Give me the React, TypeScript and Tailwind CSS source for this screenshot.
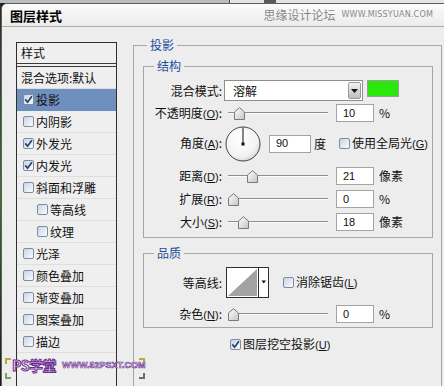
import React from 'react';

type Item = { t: string; on?: boolean; sel?: boolean; sub?: boolean };

const items: Item[] = [
  { t: '投影', on: true, sel: true },
  { t: '内阴影' },
  { t: '外发光', on: true },
  { t: '内发光', on: true },
  { t: '斜面和浮雕' },
  { t: '等高线', sub: true },
  { t: '纹理', sub: true },
  { t: '光泽' },
  { t: '颜色叠加' },
  { t: '渐变叠加' },
  { t: '图案叠加' },
  { t: '描边' },
];

function Box({ on }: { on?: boolean }) {
  return (
    <span className="flex h-[11px] w-[11px] shrink-0 items-center justify-center rounded-[2px] border border-[#7e8ca1] bg-linear-to-br from-[#c8d4e6] to-[#fbfdff]">
      {on && (
        <svg width="9" height="9" viewBox="0 0 9 9">
          <path d="M1.3 4.4 L3.6 7.2 L7.9 1.2" fill="none" stroke="#23426c" strokeWidth="1.7" />
        </svg>
      )}
    </span>
  );
}

function Key({ k }: { k: string }) {
  return (
    <span className="font-['Liberation_Sans',sans-serif] text-[11px]">
      (<span className="underline">{k}</span>)
    </span>
  );
}

function Label({ children }: { children: React.ReactNode }) {
  return <div className="w-[78px] shrink-0 whitespace-nowrap text-right leading-none">{children}</div>;
}

function Slider({ at }: { at: number }) {
  return (
    <div className="relative ml-[6px] h-[18px] w-[100px] shrink-0">
      <div className="absolute inset-x-0 top-[8px] h-px bg-[#8e8e8e]" />
      <div className="absolute inset-x-0 top-[9px] h-px bg-[#fbfbfb]" />
      <svg className="absolute top-[3px]" style={{ left: at }} width="11" height="13" viewBox="0 0 11 13">
        <defs>
          <linearGradient id="thumb" x1="0" y1="0" x2="1" y2="1">
            <stop offset="0" stopColor="#ffffff" />
            <stop offset="1" stopColor="#c4c4c4" />
          </linearGradient>
        </defs>
        <path d="M0.5 12.5 V5 L5.5 0.7 L10.5 5 V12.5 Z" fill="url(#thumb)" stroke="#7a7a7a" />
      </svg>
    </div>
  );
}

function Num({ v, unit, w = 'w-[38px]' }: { v: string; unit?: string; w?: string }) {
  return (
    <>
      <div
        className={`ml-[8px] flex h-[18px] shrink-0 items-center border border-[#a4a4a4] bg-white pl-[6px] font-['Liberation_Sans',sans-serif] text-[11px] ${w}`}
      >
        {v}
      </div>
      {unit && <span className="ml-[5px] leading-none">{unit}</span>}
    </>
  );
}

function StyleList() {
  return (
    <div className="ml-[14px] mt-[15px] h-[360px] w-[101px] shrink-0 border border-[#2e2e2e] bg-[#efefef]">
      <div className="flex h-[21px] items-center border-b border-[#3a3a3a] pl-[4px] leading-none">样式</div>
      <div className="h-[2px]" />
      <div className="flex h-[23px] items-center border-y border-t-[#3a3a3a] border-b-[#dedede] pl-[4px] leading-none">
        混合选项:默认
      </div>
      {items.map((it) => (
        <div
          key={it.t}
          className={`flex h-[22px] items-center gap-[1px] border-b leading-none ${
            it.sel ? 'border-[#6d8dbc] bg-[#6f8fbe]' : 'border-[#dedede]'
          } ${it.sub ? 'pl-[20px]' : 'pl-[6px]'}`}
        >
          <Box on={it.on} />
          <span className="ml-[1px]">{it.t}</span>
        </div>
      ))}
    </div>
  );
}

function Dial() {
  return (
    <svg className="ml-[3px] shrink-0" width="36" height="36" viewBox="0 0 36 36">
      <defs>
        <radialGradient id="dial" cx="0.4" cy="0.35" r="0.7">
          <stop offset="0" stopColor="#ffffff" />
          <stop offset="0.75" stopColor="#f2f2f2" />
          <stop offset="1" stopColor="#cfd3da" />
        </radialGradient>
      </defs>
      <circle cx="18" cy="18" r="17" fill="url(#dial)" stroke="#3d4350" strokeWidth="1" />
      <line x1="18" y1="18" x2="18" y2="1.5" stroke="#111" strokeWidth="1" />
      <rect x="16.5" y="16.5" width="3" height="3" fill="#111" />
    </svg>
  );
}

function Contour() {
  return (
    <svg className="ml-[4px] shrink-0" width="43" height="31" viewBox="0 0 43 31">
      <rect x="0.5" y="0.5" width="42" height="30" fill="#fff" stroke="#2f2f2f" />
      <path d="M2 29 L31 2 L31 29 Z" fill="#a3a3a3" />
      <line x1="32.5" y1="1" x2="32.5" y2="30" stroke="#2f2f2f" />
      <path d="M35.5 13.5 L40 13.5 L37.75 16.5 Z" fill="#111" />
    </svg>
  );
}

function Legend({ children, ml }: { children: React.ReactNode; ml: string }) {
  return <legend className={`${ml} px-[3px] text-[12px] leading-[14px] text-[#1c4e9c]`}>{children}</legend>;
}

function Panel() {
  return (
    <fieldset className="ml-[16px] mt-[11px] h-[360px] w-[309px] shrink-0 border border-[#a6a6a6]">
      <Legend ml="ml-[13px]">投影</Legend>

      <fieldset className="ml-[9px] mt-[7px] w-[290px] border border-[#a6a6a6] pb-[6px]">
        <Legend ml="ml-[10px]">结构</Legend>

        <div className="mt-[7px] flex h-[21px] items-start">
          <div className="flex h-[21px] items-center">
            <Label>混合模式:</Label>
          </div>
          <div className="ml-[2px] flex h-[21px] w-[139px] shrink-0 items-center border border-[#8e8e8e] bg-white">
            <span className="flex-1 pl-[8px] leading-none">溶解</span>
            <div className="mr-px flex h-[17px] w-[13px] items-center justify-center rounded-[2px] border border-[#9a9a9a] bg-linear-to-b from-[#f4f4f4] to-[#bdbdbd]">
              <svg width="7" height="4" viewBox="0 0 7 4">
                <path d="M0 0 H7 L3.5 4 Z" fill="#111" />
              </svg>
            </div>
          </div>
          <div className="ml-[4px] h-[17px] w-[32px] shrink-0 border border-[#9c9c9c] bg-[#2ae80c]" />
        </div>

        <div className="mt-[3px] flex h-[18px] items-center">
          <Label>
            不透明度<Key k="O" />:
          </Label>
          <Slider at={6} />
          <Num v="10" unit="%" />
        </div>

        <div className="mt-[4px] flex h-[35px] items-center">
          <Label>
            角度<Key k="A" />:
          </Label>
          <Dial />
          <Num v="90" w="w-[42px]" />
          <span className="ml-[3px] leading-none">度</span>
          <span className="ml-[13px]">
            <Box />
          </span>
          <span className="ml-[2px] whitespace-nowrap leading-none">
            使用全局光<Key k="G" />
          </span>
        </div>

        <div className="mt-[6px] flex h-[18px] items-center">
          <Label>
            距离<Key k="D" />:
          </Label>
          <Slider at={19} />
          <Num v="21" unit="像素" />
        </div>

        <div className="mt-[5px] flex h-[18px] items-center">
          <Label>
            扩展<Key k="R" />:
          </Label>
          <Slider at={0} />
          <Num v="0" unit="%" />
        </div>

        <div className="mt-[5px] flex h-[18px] items-center">
          <Label>
            大小<Key k="S" />:
          </Label>
          <Slider at={10} />
          <Num v="18" unit="像素" />
        </div>
      </fieldset>

      <fieldset className="ml-[9px] mt-[8px] w-[290px] border border-[#a6a6a6] pb-[4px]">
        <Legend ml="ml-[10px]">品质</Legend>

        <div className="mt-[7px] flex h-[31px] items-center">
          <Label>等高线:</Label>
          <Contour />
          <span className="ml-[14px]">
            <Box />
          </span>
          <span className="ml-[2px] whitespace-nowrap leading-none">
            消除锯齿<Key k="L" />
          </span>
        </div>

        <div className="mt-[7px] flex h-[18px] items-center">
          <Label>
            杂色<Key k="N" />:
          </Label>
          <Slider at={0} />
          <Num v="0" unit="%" />
        </div>
      </fieldset>

      <div className="ml-[96px] mt-[9px] flex h-[14px] items-center">
        <Box on />
        <span className="ml-[2px] whitespace-nowrap leading-none">
          图层挖空投影<Key k="U" />
        </span>
      </div>
    </fieldset>
  );
}

function TitleBar() {
  return (
    <div className="flex h-[23px] shrink-0 items-center border-b border-[#ababab] bg-linear-to-b from-[#fbfbfb] to-[#ececec] pl-[8px] pr-[11px]">
      <span className="text-[13px] font-bold leading-none text-black">图层样式</span>
      <span className="ml-auto leading-none text-[#8a8a8a]">思缘设计论坛</span>
      <span className="ml-[6px] font-['DejaVu_Sans',sans-serif] text-[8px] leading-none tracking-[0.2px] text-[#8a8a8a]">
        WWW.MISSYUAN.COM
      </span>
    </div>
  );
}

function Watermark() {
  return (
    <>
      <div className="absolute left-[5px] top-[358px] h-[6px] w-[6px] border-l-2 border-t-2 border-[#b9a93e]" />
      <div className="absolute left-[5px] top-[373px] h-[6px] w-[6px] border-b-2 border-l-2 border-[#7aa35a]" />
      <div className="absolute left-[139px] top-[358px] h-[6px] w-[6px] border-r-2 border-t-2 border-[#b9a93e]" />
      <div className="absolute left-[139px] top-[373px] h-[6px] w-[6px] border-b-2 border-r-2 border-[#6b6b6b]" />
      <div className="absolute left-[12px] top-[358px] flex items-center">
        <span className="text-[14px] font-bold leading-none tracking-[-0.5px] text-[#f3ecff] [-webkit-text-stroke:1px_#6a2c8e]">
          PS学堂
        </span>
        <span className="ml-[6px] font-['Liberation_Sans',sans-serif] text-[9px] font-bold leading-none text-[#f3ecff] [-webkit-text-stroke:0.6px_#6a2c8e]">
          WWW.52PSXT.COM
        </span>
      </div>
    </>
  );
}

export default function App() {
  return (
    <div className="relative flex h-[386px] w-[444px] flex-col overflow-hidden bg-[#1b1b1b] font-['Noto_Sans_CJK_SC','Liberation_Sans',sans-serif] text-[12px] text-[#111]">
      <div className="flex h-[3px] shrink-0">
        <div className="w-[229px] bg-[#bcbcbc]" />
        <div className="w-px bg-[#4a4a4a]" />
        <div className="w-[34px] bg-[#e4e4e4]" />
        <div className="w-[12px] bg-[#5a5a5a]" />
        <div className="flex-1 bg-[#e4e4e4]" />
      </div>
      <div className="flex min-h-0 flex-1">
        <div className="w-px shrink-0 bg-linear-to-b from-[#2a2a2a] via-[#2f7a22] to-[#1a1a1a]" />
        <div className="flex flex-1 flex-col overflow-hidden rounded-tl-[6px] border-l border-t border-[#5e5e5e] bg-[#ededed]">
          <TitleBar />
          <div className="flex items-start">
            <StyleList />
            <Panel />
          </div>
        </div>
      </div>
      <Watermark />
    </div>
  );
}
